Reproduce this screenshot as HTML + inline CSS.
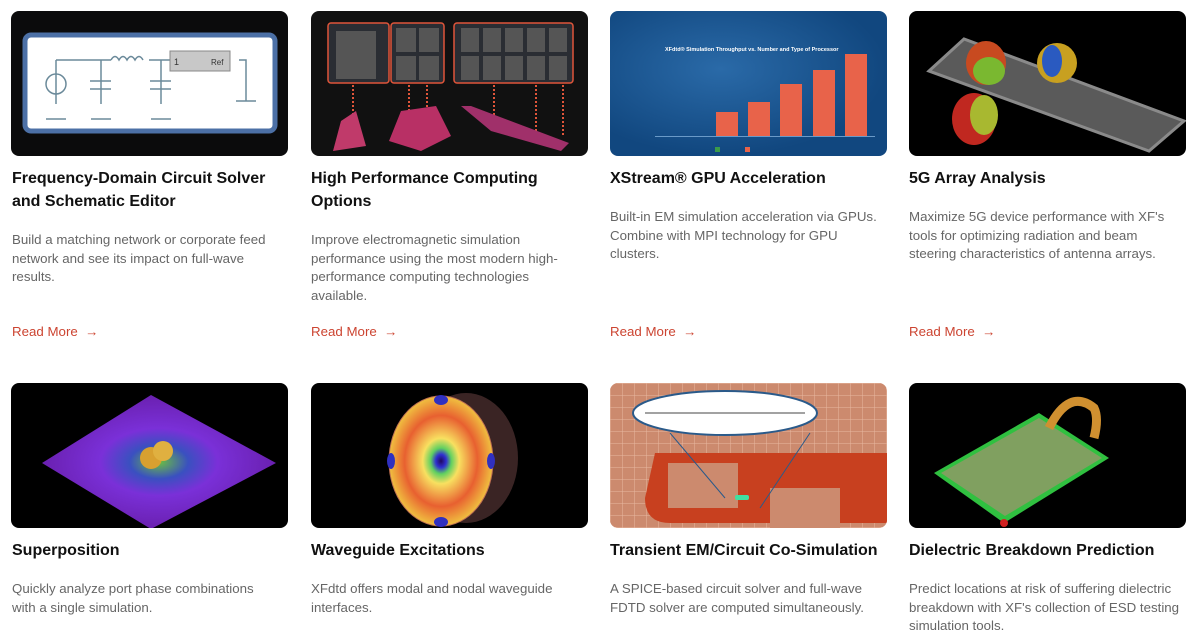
<!DOCTYPE html>
<html><head><meta charset="utf-8"><style>
body{margin:0;background:#fff;width:1200px;height:641px;overflow:hidden;position:relative;font-family:"Liberation Sans",sans-serif}
.im{position:absolute;width:277px;height:145px;border-radius:8px;overflow:hidden;background:#000}
.im svg{display:block}
.t{position:absolute;font-weight:bold;font-size:16px;line-height:22.5px;color:#111;white-space:nowrap}
.b{position:absolute;font-size:13.3px;line-height:18.5px;color:#666;white-space:nowrap}
.r{position:absolute;font-size:13.3px;color:#cc4431;white-space:nowrap}
</style></head><body>

<div class="im" style="left:11px;top:11px;background:#0b0b0c">
<svg width="277" height="145"><rect x="14" y="24" width="250" height="96" rx="6" fill="#fff" stroke="#4c70a6" stroke-width="5"/>
<g stroke="#6b8a9a" stroke-width="1.5" fill="none"><path d="M45 49H100M138 49H165M228 49H235V90M45 49V93M90 49V93M150 49V93"/><path d="M100 49q4-7 8 0q4-7 8 0q4-7 8 0q4-7 8 0"/><circle cx="45" cy="73" r="10"/><path d="M79 70H100M79 78H100M139 70H160M139 78H160M35 108H55M80 108H100M140 108H160M225 90H245"/></g>
<rect x="159" y="40" width="60" height="20" fill="#c8c8c8" stroke="#888"/><text x="163" y="54" font-size="9" fill="#333">1</text><text x="200" y="54" font-size="8" fill="#333">Ref</text></svg></div>

<div class="im" style="left:311px;top:11px;background:#111">
<svg width="277" height="145"><g fill="#2a2d33" stroke="#e0553a" stroke-width="1.5"><rect x="17" y="12" width="61" height="60" rx="3"/><rect x="80" y="12" width="53" height="60" rx="3"/><rect x="143" y="12" width="119" height="60" rx="3"/></g>
<g fill="#555"><rect x="25" y="20" width="40" height="48"/><rect x="85" y="17" width="20" height="24"/><rect x="108" y="17" width="20" height="24"/><rect x="85" y="45" width="20" height="24"/><rect x="108" y="45" width="20" height="24"/>
<rect x="150" y="17" width="18" height="24"/><rect x="172" y="17" width="18" height="24"/><rect x="194" y="17" width="18" height="24"/><rect x="216" y="17" width="18" height="24"/><rect x="238" y="17" width="18" height="24"/>
<rect x="150" y="45" width="18" height="24"/><rect x="172" y="45" width="18" height="24"/><rect x="194" y="45" width="18" height="24"/><rect x="216" y="45" width="18" height="24"/><rect x="238" y="45" width="18" height="24"/></g>
<g stroke="#e0553a" stroke-width="2" stroke-dasharray="2 2"><path d="M42 74V105M98 74V105M116 74V105M183 74V110M225 74V120M252 74V125"/></g>
<path d="M22 140L30 110L45 100L55 135Z" fill="#c03a6a"/><path d="M78 130L90 100L125 95L140 125L110 140Z" fill="#b83065"/><path d="M150 95L180 120L250 140L258 132L160 95Z" fill="#a0306a"/></svg></div>

<div class="im" style="left:610px;top:11px;background:radial-gradient(ellipse at 40% 40%,#2a6aa8,#11477f 70%)">
<svg width="277" height="145"><text x="55" y="40" font-size="5.5" fill="#fff" font-weight="bold">XFdtd® Simulation Throughput vs. Number and Type of Processor</text>
<g fill="#e8634a"><rect x="106" y="101" width="22" height="24"/><rect x="138" y="91" width="22" height="34"/><rect x="170" y="73" width="22" height="52"/><rect x="203" y="59" width="22" height="66"/><rect x="235" y="43" width="22" height="82"/></g>
<rect x="45" y="125" width="220" height="1" fill="#6a9ac8"/><rect x="105" y="136" width="5" height="5" fill="#3a9a4a"/><rect x="135" y="136" width="5" height="5" fill="#e8634a"/></svg></div>

<div class="im" style="left:909px;top:11px">
<svg width="277" height="145"><path d="M20 60L55 28L275 110L240 140Z" fill="#5a5a5a" stroke="#8a8a8a" stroke-width="3"/>
<ellipse cx="77" cy="52" rx="20" ry="22" fill="#c84a20"/><ellipse cx="80" cy="60" rx="16" ry="14" fill="#7ab830"/>
<ellipse cx="148" cy="52" rx="20" ry="20" fill="#c8a020"/><ellipse cx="143" cy="50" rx="10" ry="16" fill="#2a5ac0"/>
<ellipse cx="65" cy="108" rx="22" ry="26" fill="#c02820"/><ellipse cx="75" cy="104" rx="14" ry="20" fill="#a8b830"/></svg></div>

<div class="im" style="left:11px;top:383px">
<svg width="277" height="145"><defs><radialGradient id="g1" cx="50%" cy="50%" r="50%"><stop offset="0" stop-color="#6ac040"/><stop offset=".25" stop-color="#3a50c0"/><stop offset=".5" stop-color="#7a30d8"/><stop offset="1" stop-color="#6a20b0"/></radialGradient></defs>
<path d="M31 86L140 18L265 86L140 152Z" fill="url(#g1)" transform="translate(0,-6)"/><circle cx="140" cy="75" r="11" fill="#d8a030"/><circle cx="152" cy="68" r="10" fill="#e0b040"/></svg></div>

<div class="im" style="left:311px;top:383px">
<svg width="277" height="145"><defs><radialGradient id="g2" cx="50%" cy="50%" r="50%"><stop offset="0" stop-color="#200860"/><stop offset=".1" stop-color="#3030d0"/><stop offset=".2" stop-color="#60d060"/><stop offset=".35" stop-color="#f8e060"/><stop offset=".7" stop-color="#e86030"/><stop offset="1" stop-color="#f0c040"/></radialGradient></defs>
<ellipse cx="155" cy="75" rx="52" ry="65" fill="#3a2424"/><ellipse cx="130" cy="78" rx="52" ry="65" fill="url(#g2)" stroke="#c07050"/>
<g fill="#3030c0"><ellipse cx="130" cy="17" rx="7" ry="5"/><ellipse cx="130" cy="139" rx="7" ry="5"/><ellipse cx="80" cy="78" rx="4" ry="8"/><ellipse cx="180" cy="78" rx="4" ry="8"/></g></svg></div>

<div class="im" style="left:610px;top:383px;background:#cc8a6e">
<svg width="277" height="145"><defs><pattern id="gr" width="12" height="12" patternUnits="userSpaceOnUse"><path d="M0 0H12M0 0V12" stroke="#e8b8a0" stroke-width="1"/></pattern></defs>
<rect width="277" height="145" fill="url(#gr)"/><path d="M45 70H277V140H60Q35 140 35 115Z" fill="#c8401f"/><rect x="58" y="80" width="70" height="45" fill="#cc8a6e"/><rect x="160" y="105" width="70" height="40" fill="#cc8a6e"/>
<ellipse cx="115" cy="30" rx="92" ry="22" fill="#fff" stroke="#2a5a8a" stroke-width="2"/><path d="M60 50L115 115M200 50L150 125" stroke="#2a5a8a"/><rect x="125" y="112" width="14" height="5" rx="2" fill="#40e0a0"/>
<path d="M35 30H195" stroke="#444"/></svg></div>

<div class="im" style="left:909px;top:383px">
<svg width="277" height="145"><path d="M25 90L130 30L200 75L95 140Z" fill="#30c040"/><path d="M32 90L130 35L193 75L96 133Z" fill="#80a060"/><path d="M140 45q20-40 45-20q5 10 0 30" stroke="#d09030" stroke-width="9" fill="none"/><circle cx="95" cy="140" r="4" fill="#d02020"/></svg></div>

<div class="t" style="left:12px;top:168px">Frequency-Domain Circuit Solver<br>and Schematic Editor</div>
<div class="b" style="left:12px;top:231px">Build a matching network or corporate feed<br>network and see its impact on full-wave<br>results.</div>
<div class="r" style="left:12px;top:324px">Read More &nbsp;→</div>

<div class="t" style="left:311px;top:168px">High Performance Computing<br>Options</div>
<div class="b" style="left:311px;top:231px">Improve electromagnetic simulation<br>performance using the most modern high-<br>performance computing technologies<br>available.</div>
<div class="r" style="left:311px;top:324px">Read More &nbsp;→</div>

<div class="t" style="left:610px;top:168px">XStream® GPU Acceleration</div>
<div class="b" style="left:610px;top:208px">Built-in EM simulation acceleration via GPUs.<br>Combine with MPI technology for GPU<br>clusters.</div>
<div class="r" style="left:610px;top:324px">Read More &nbsp;→</div>

<div class="t" style="left:909px;top:168px">5G Array Analysis</div>
<div class="b" style="left:909px;top:208px">Maximize 5G device performance with XF's<br>tools for optimizing radiation and beam<br>steering characteristics of antenna arrays.</div>
<div class="r" style="left:909px;top:324px">Read More &nbsp;→</div>

<div class="t" style="left:12px;top:540px">Superposition</div>
<div class="b" style="left:12px;top:580px">Quickly analyze port phase combinations<br>with a single simulation.</div>
<div class="t" style="left:311px;top:540px">Waveguide Excitations</div>
<div class="b" style="left:311px;top:580px">XFdtd offers modal and nodal waveguide<br>interfaces.</div>
<div class="t" style="left:610px;top:540px">Transient EM/Circuit Co-Simulation</div>
<div class="b" style="left:610px;top:580px">A SPICE-based circuit solver and full-wave<br>FDTD solver are computed simultaneously.</div>
<div class="t" style="left:909px;top:540px">Dielectric Breakdown Prediction</div>
<div class="b" style="left:909px;top:580px">Predict locations at risk of suffering dielectric<br>breakdown with XF's collection of ESD testing<br>simulation tools.</div>
</body></html>
